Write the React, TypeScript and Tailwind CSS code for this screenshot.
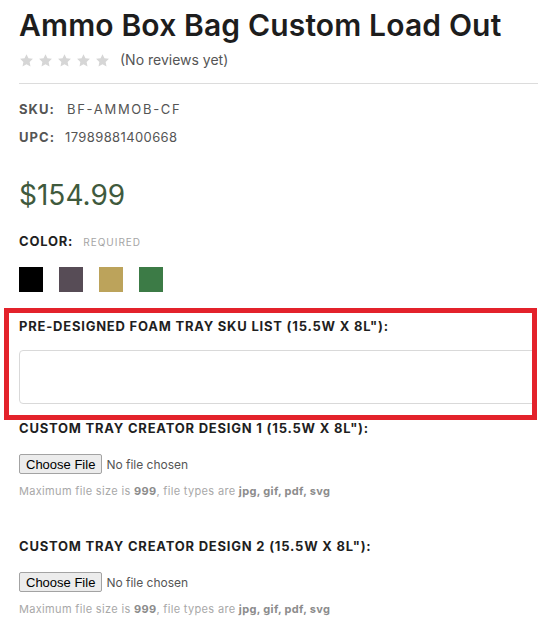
import React from "react";

const SWATCHES = ["#000000", "#574c56", "#bca35b", "#3c7b46"];

function Star() {
  return (
    <svg viewBox="0 0 24 24" className="h-[15px] w-[15px]" aria-hidden="true">
      <path
        d="M12 1.8l3.1 6.6 7.2.9-5.3 5 1.4 7.1L12 17.9l-6.4 3.5 1.4-7.1-5.3-5 7.2-.9z"
        fill="#d6d6d6"
      />
    </svg>
  );
}

function FileField({ label }: { label: string }) {
  return (
    <div className="flex flex-col">
      <span className="text-[13px] font-bold uppercase leading-[16px] tracking-[0.06em] text-[#1f1f1f]">
        {label}
      </span>
      <div className="mt-[18px] flex h-[20px] items-center">
        <input
          type="file"
          className="h-[20px] text-[12px] leading-[20px] text-[#555] file:mr-[4px] file:h-[20px] file:rounded-[2px] file:border file:border-[#a3a3a3] file:bg-[#ececec] file:px-[6px] file:font-['Liberation_Sans',Arial,sans-serif] file:text-[13px] file:text-black"
        />
      </div>
      <p className="mt-[9px] text-[11px] leading-[17px] tracking-[0.03em] text-[#a8a8a8]">
        Maximum file size is <b className="text-[#8c8c8c]">999</b>, file types are{" "}
        <b className="text-[#8c8c8c]">jpg, gif, pdf, svg</b>
      </p>
    </div>
  );
}

export default function App() {
  return (
    <div className="h-[626px] w-[538px] overflow-hidden bg-white pl-[19px] font-['Inter',sans-serif] text-[#222]">
      <h1 className="pt-[6px] text-[30px] font-semibold leading-[38px] tracking-[0.005em] text-[#1d1d1d]">
        Ammo Box Bag Custom Load Out
      </h1>

      <div className="mt-[7px] flex items-center gap-[10px]">
        <div className="flex gap-[4px]">
          {[0, 1, 2, 3, 4].map((i) => (
            <Star key={i} />
          ))}
        </div>
        <span className="text-[14px] leading-[18px] text-[#555]">(No reviews yet)</span>
      </div>

      <hr className="mt-[14px] border-t border-[#dcdcdc]" />

      <dl className="mt-[15px] flex flex-col gap-[8px] text-[13px] leading-[20px]">
        <div className="flex">
          <dt className="w-[48px] font-bold tracking-[0.08em] text-[#555]">SKU:</dt>
          <dd className="tracking-[0.13em] text-[#555]">BF-AMMOB-CF</dd>
        </div>
        <div className="flex">
          <dt className="w-[46px] font-bold tracking-[0.08em] text-[#555]">UPC:</dt>
          <dd className="tracking-[0.03em] text-[#555]">17989881400668</dd>
        </div>
      </dl>

      <div className="mt-[31px] text-[28px] leading-[34px] text-[#3f5a3d]">$154.99</div>

      <div className="mt-[19px] flex items-baseline gap-[10px]">
        <span className="text-[13px] font-bold uppercase leading-[20px] tracking-[0.06em] text-[#1f1f1f]">
          Color:
        </span>
        <span className="text-[10px] uppercase tracking-[0.1em] text-[#a5a5a5]">Required</span>
      </div>

      <div className="mt-[16px] flex gap-[16px]">
        {SWATCHES.map((c) => (
          <span key={c} className="h-[25px] w-[24px]" style={{ backgroundColor: c }} />
        ))}
      </div>

      <div className="-ml-[15px] mt-[16px] h-[112px] w-[533px] overflow-hidden border-[5px] border-[#e3222b] pl-[10px] pt-[5px]">
        <span className="block text-[13px] font-bold uppercase leading-[16px] tracking-[0.06em] text-[#1f1f1f]">
          Pre-Designed Foam Tray SKU List (15.5W x 8L"):
        </span>
        <input
          type="text"
          className="mt-[16px] block h-[54px] w-[560px] rounded-[4px] border border-[#d9d9d9] bg-white"
        />
      </div>

      <FileField label='Custom Tray Creator Design 1 (15.5W x 8L"):' />
      <div className="mt-[38px]">
        <FileField label='Custom Tray Creator Design 2 (15.5W x 8L"):' />
      </div>
    </div>
  );
}
